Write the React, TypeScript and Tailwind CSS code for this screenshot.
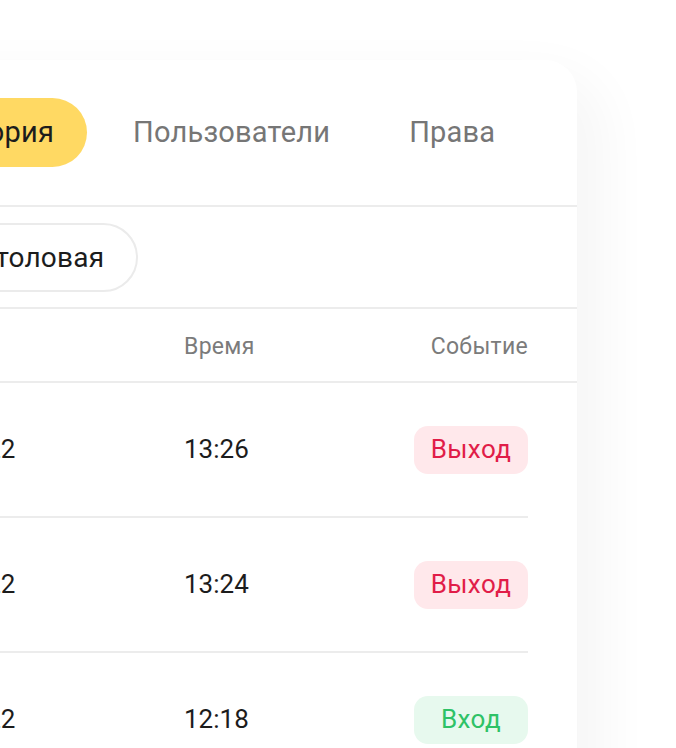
import React from "react";

const rows = [
  { date: "12.05.22", time: "13:26", event: "Выход" },
  { date: "12.05.22", time: "13:24", event: "Выход" },
  { date: "12.05.22", time: "12:18", event: "Вход" },
];

export default function App() {
  return (
    <div
      className="h-[748px] w-[676px] overflow-hidden bg-white pt-[60px]"
      style={{ fontFamily: "Roboto, 'Noto Sans', sans-serif" }}
    >
      <div className="ml-[-135px] w-[712px] rounded-[32px] bg-white shadow-[0_40px_50px_30px_rgba(0,0,0,0.035)]">
        {/* Tabs */}
        <div className="flex items-center gap-[13px] border-b-2 border-[#ececec] pb-[38px] pl-[40px] pr-[49px] pt-[38px]">
          <div className="flex h-[69px] items-center rounded-full bg-[#ffd963] px-[33px] text-[29px] tracking-[0.2px] text-[#1c1c1c]">
            История
          </div>
          <div className="flex h-[69px] items-center rounded-full px-[33px] text-[29px] tracking-[0.2px] text-[#767676]">
            Пользователи
          </div>
          <div className="flex h-[69px] items-center rounded-full px-[33px] text-[29px] tracking-[0.2px] text-[#767676]">
            Права
          </div>
        </div>

        {/* Filter chips */}
        <div className="flex items-center border-b-2 border-[#ececec] pb-[15px] pl-[78px] pt-[16px]">
          <div className="flex h-[69px] items-center rounded-full border-2 border-[#ebebeb] px-[32px] text-[28px] tracking-[0.2px] text-[#1c1c1c]">
            Столовая
          </div>
        </div>

        {/* Table header */}
        <div className="grid h-[74px] grid-cols-[270px_1fr_auto] items-center border-b-2 border-[#ececec] px-[49px] pt-[4px] text-[23px] tracking-[0.3px] text-[#7b7b7b]">
          <div>Дата</div>
          <div>Время</div>
          <div className="text-right">Событие</div>
        </div>

        {/* Rows */}
        <div className="px-[49px]">
          {rows.map((r, i) => (
            <div
              key={i}
              className="grid h-[135px] grid-cols-[270px_1fr_auto] items-center border-b-2 border-[#ececec] text-[26px] text-[#1c1c1c]"
            >
              <div>{r.date}</div>
              <div>{r.time}</div>
              <div className="flex justify-end">
                {r.event === "Выход" ? (
                  <span className="flex h-[48px] w-[114px] items-center justify-center rounded-[14px] bg-[#ffe8eb] text-[26px] tracking-[0.4px] text-[#e11d48]">
                    {r.event}
                  </span>
                ) : (
                  <span className="flex h-[48px] w-[114px] items-center justify-center rounded-[14px] bg-[#e7f9ee] text-[26px] tracking-[0.4px] text-[#2ec266]">
                    {r.event}
                  </span>
                )}
              </div>
            </div>
          ))}
        </div>
      </div>
    </div>
  );
}
